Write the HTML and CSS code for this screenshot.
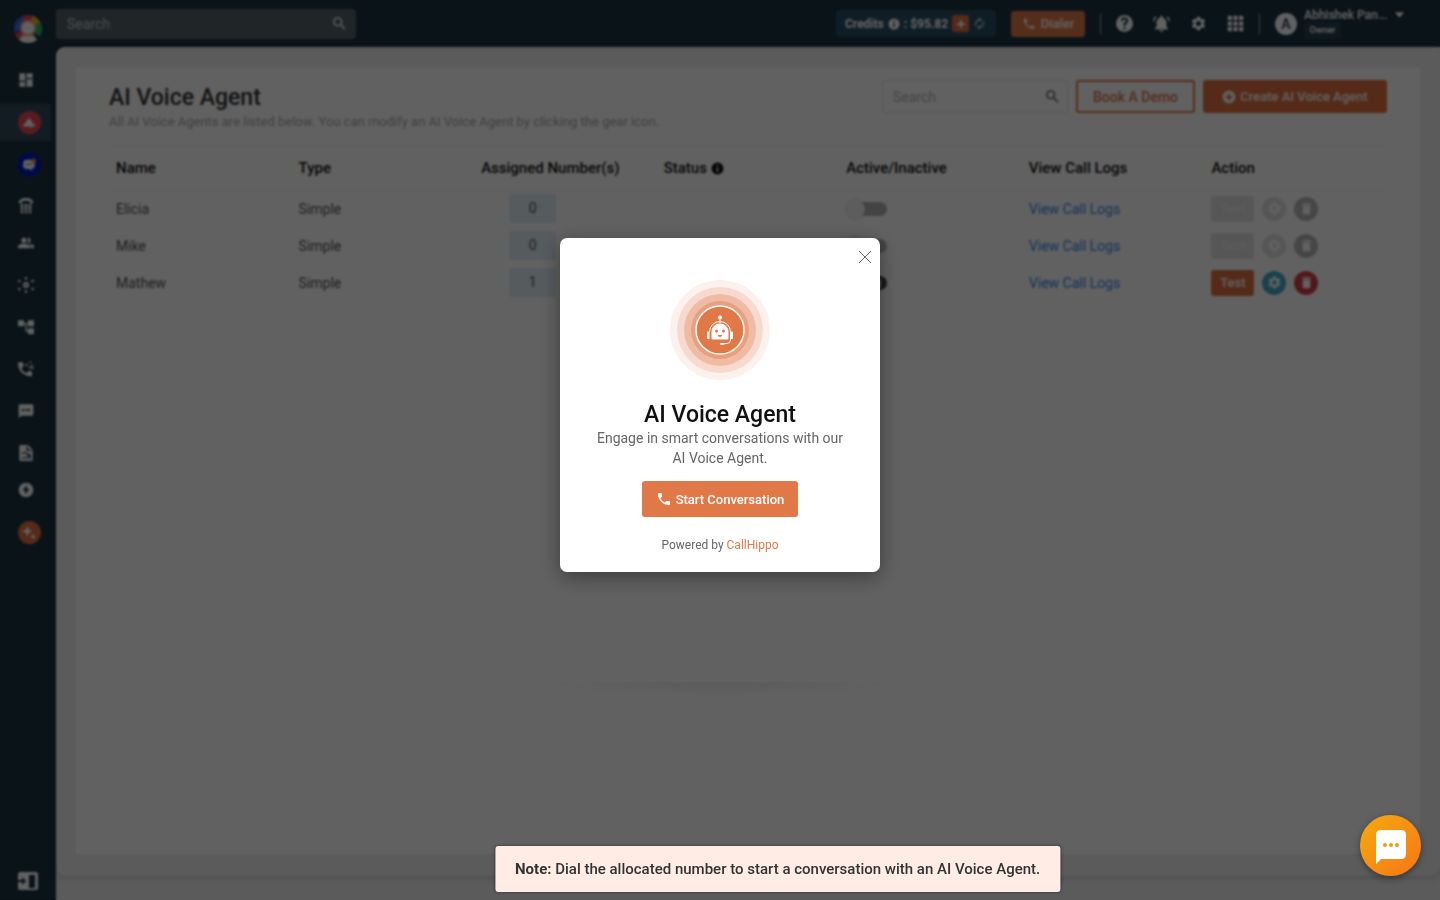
FILE: index.html
```html
<!doctype html>
<html lang="en">
<head>
    <meta charset="UTF-8">
    <meta name="viewport" content="width=device-width, initial-scale=1.0">
    <title>AI Voice Agent</title>
    <link rel="stylesheet" href="styles.css">
</head>
<body>
    <svg class="sprite" aria-hidden="true">
        <symbol id="i-search" viewBox="0 0 24 24"><path d="M15.5 14h-.79l-.28-.27A6.47 6.47 0 0 0 16 9.5 6.5 6.5 0 1 0 9.5 16c1.61 0 3.09-.59 4.23-1.57l.27.28v.79l5 4.99L20.49 19l-4.99-5zm-6 0C7.01 14 5 11.99 5 9.5S7.01 5 9.5 5 14 7.01 14 9.5 11.99 14 9.5 14z"/></symbol>
        <symbol id="i-phone" viewBox="0 0 24 24"><path d="M6.62 10.79a15.05 15.05 0 0 0 6.59 6.59l2.2-2.2a1 1 0 0 1 1.02-.24c1.12.37 2.33.57 3.57.57a1 1 0 0 1 1 1V20a1 1 0 0 1-1 1A17 17 0 0 1 3 4a1 1 0 0 1 1-1h3.5a1 1 0 0 1 1 1c0 1.25.2 2.45.57 3.57a1 1 0 0 1-.25 1.02l-2.2 2.2z"/></symbol>
        <symbol id="i-gear" viewBox="0 0 24 24"><path d="M19.14 12.94c.04-.3.06-.61.06-.94s-.02-.64-.07-.94l2.03-1.58a.49.49 0 0 0 .12-.61l-1.92-3.32a.49.49 0 0 0-.59-.22l-2.39.96a7.03 7.03 0 0 0-1.62-.94l-.36-2.54a.48.48 0 0 0-.48-.41h-3.84a.47.47 0 0 0-.47.41l-.36 2.54c-.59.24-1.13.57-1.62.94l-2.39-.96a.48.48 0 0 0-.59.22L2.74 8.87a.48.48 0 0 0 .12.61l2.03 1.58c-.05.3-.09.63-.09.94s.02.64.07.94l-2.03 1.58a.49.49 0 0 0-.12.61l1.92 3.32c.12.22.37.29.59.22l2.39-.96c.5.38 1.03.7 1.62.94l.36 2.54c.05.24.24.41.48.41h3.84c.24 0 .44-.17.47-.41l.36-2.54c.59-.24 1.13-.56 1.62-.94l2.39.96c.22.08.47 0 .59-.22l1.92-3.32a.48.48 0 0 0-.12-.61l-2.01-1.58zM12 15.6A3.6 3.6 0 1 1 12 8.4a3.6 3.6 0 0 1 0 7.2z"/></symbol>
        <symbol id="i-trash" viewBox="0 0 24 24"><path d="M6 19a2 2 0 0 0 2 2h8a2 2 0 0 0 2-2V7H6v12zM19 4h-3.5l-1-1h-5l-1 1H5v2h14V4z"/></symbol>
        <symbol id="i-info" viewBox="0 0 24 24"><path d="M12 1a11 11 0 1 0 0 22 11 11 0 0 0 0-22zm1.500 17h-3v-7.500h3V18zm0-9.500h-3v-3h3v3z"/></symbol>
    </svg>

    <div class="app">
        <nav class="sidebar">
            <a class="logo" href="#" aria-label="Home">
                <svg viewBox="0 0 28 28" width="28" height="28">
                    <clipPath id="logo-clip"><circle cx="14" cy="14" r="14"/></clipPath>
                    <g clip-path="url(#logo-clip)">
                        <path d="M14 14V-4H-4v22z" fill="#3a6fe0"/>
                        <path d="M14 14 8 3 12-2h8z" fill="#e8455a"/>
                        <path d="M14 14 20-4h10v12z" fill="#f2b01e"/>
                        <path d="M14 14 30 5v19z" fill="#2db36a"/>
                        <path d="M14 14-2 19l6 9z" fill="#e8455a"/>
                        <circle cx="14" cy="13" r="8" fill="#f3a9a0"/>
                        <path d="M7 20h14v4H7z" fill="#f0c070"/>
                        <ellipse cx="14" cy="27" rx="10" ry="6" fill="#fff"/>
                        <circle cx="14" cy="13" r="6" fill="#fff"/>
                    </g>
                </svg>
            </a>
            <a class="nav-item" href="#" aria-label="Dashboard"><svg viewBox="0 0 24 24"><path d="M2 13h9V2H2v11zm0 9h9v-7H2v7zm11 0h9V11h-9v11zm0-20v7h9V2h-9z"/></svg></a>
            <a class="nav-item has-badge active" href="#" aria-label="AI Voice Agent">
                <span class="badge red"><svg viewBox="0 0 24 24"><path d="M12 2l2 4 2 1 1 4 5 4v3h-5l-3 3v-3H2v-3l5-4 1-4 3-1z"/></svg></span>
            </a>
            <a class="nav-item has-badge" href="#" aria-label="Chat">
                <span class="badge blue"><svg viewBox="0 0 24 24"><path d="M8 3h8q6 0 6 6v3q0 6-5 6l1 4-6-3H8q-6 0-6-6V9q0-6 6-6z"/><path d="M6 11h11" stroke="#8a8fd0" stroke-width="2"/><circle cx="20" cy="5" r="4" fill="#f09a1a"/></svg></span>
            </a>
            <a class="nav-item tight" href="#" aria-label="Numbers"><svg viewBox="0 0 24 24"><path d="M12 0C5 0 1 3 1 8h5V5q6-2 12 0v3h5c0-5-4-8-11-8z"/><path d="M4 9h4v4H4zm6 0h4v4h-4zm6 0h4v4h-4zM4 14h4v4H4zm6 0h4v4h-4zm6 0h4v4h-4zM4 19h4v4H4zm6 0h4v4h-4zm6 0h4v4h-4z"/></svg></a>
            <a class="nav-item close-up" href="#" aria-label="Users"><svg viewBox="0 0 24 24"><path d="M16.700 13.100C18 14 19 15.300 19 17v3h5v-3c0-2.200-3.600-3.500-7.300-3.900zM9 12a4 4 0 1 0 0-8 4 4 0 0 0 0 8zm6 0a4 4 0 1 0 0-8c-.5 0-.9.100-1.300.200a6 6 0 0 1 0 7.600c.4.100.8.200 1.300.200zm-6 1c-3 0-9 1.300-9 4v3h18v-3c0-2.700-6-4-9-4z"/></svg></a>
            <a class="nav-item" href="#" aria-label="Integrations"><svg viewBox="0 0 24 24"><circle cx="12" cy="12" r="3" fill="none" stroke="#fff" stroke-width="3"/><circle cx="12" cy="2" r="2"/><circle cx="12" cy="22" r="2"/><circle cx="2" cy="6" r="2"/><circle cx="22" cy="6" r="2"/><circle cx="2" cy="18" r="2"/><circle cx="22" cy="18" r="2"/></svg></a>
            <a class="nav-item" href="#" aria-label="Call flow"><svg viewBox="0 0 24 24"><path d="M24 11V2h-9v4H9V2H0v9h9V8h2v11h4v4h9v-9h-9v3h-2V8h2v3z"/></svg></a>
            <a class="nav-item" href="#" aria-label="Power dialer"><svg viewBox="0 0 24 24"><path d="M5 10.800C6.400 14.600 9.400 17 13.200 18.400l2.200-3.200q.5-.4 1-.2l4.600.6V22a1 1 0 0 1-1 1C8 23 0 14 0 3a1 1 0 0 1 1-1h6.500l1 5q0 .8-.4 1.200z"/><path d="M11 5l3-1 1 3-3 1zm6-3l2-2 1 2-2 2zm-1 8l6-5 1 1-6 6zm4-1h3v3h-3z"/></svg></a>
            <a class="nav-item" href="#" aria-label="SMS"><svg viewBox="0 0 24 24"><path d="M21 2H3a2 2 0 0 0-2 2v19l4-4h16a2 2 0 0 0 2-2V4a2 2 0 0 0-2-2zM9 12H6V9h3v3zm5 0h-3V9h3v3zm4 0h-3V9h3v3z"/></svg></a>
            <a class="nav-item" href="#" aria-label="Reports"><svg viewBox="0 0 24 24"><path d="M4 0h11l7 7v15a2 2 0 0 1-2 2H4a2 2 0 0 1-2-2V2a2 2 0 0 1 2-2z"/><path d="M14 2v6h6M6 13q4-4 7 0t5 0M7 21v-3m4 3v-4m4 4v-5m3 5v-6" fill="none" stroke="#1a3040" stroke-width="2"/></svg></a>
            <a class="nav-item close-up" href="#" aria-label="Activity"><svg viewBox="0 0 24 24"><path d="M12 1a11 11 0 1 0 0 22 11 11 0 0 0 0-22zm-1 18v-6H7l6-9v6h4z"/></svg></a>
            <a class="nav-item has-badge" href="#" aria-label="AI">
                <span class="badge orange"><svg viewBox="0 0 24 24"><path d="M9 0l2.500 6.500L18 9l-6.500 2.500L9 18l-2.500-6.500L0 9l6.500-2.500zM19 13l1.500 3.500L24 18l-3.500 1.500L19 23l-1.500-3.500L14 18l3.500-1.500z"/></svg></span>
            </a>
            <a class="nav-item nav-bottom" href="#" aria-label="Expand menu"><svg viewBox="0 0 20 18"><path d="M2 0h16a2 2 0 0 1 2 2v14a2 2 0 0 1-2 2H2a2 2 0 0 1-2-2V2a2 2 0 0 1 2-2z"/><path d="M11 3h6v13h-6zM0 8h4V5l4 4-4 4v-3H0z" fill="#1a3040"/></svg></a>
        </nav>

        <div class="page">
            <header class="topbar">
                <div class="top-search">
                    <input type="search" placeholder="Search" aria-label="Search">
                    <svg class="icon"><use href="#i-search"/></svg>
                </div>
                <div class="top-right">
                    <div class="credits">
                        <span>Credits</span>
                        <svg class="icon"><use href="#i-info"/></svg>
                        <span>: $95.82</span>
                        <button class="add" aria-label="Add credits"><svg viewBox="0 0 10 10"><path d="M4 1h2v3h3v2H6v3H4V6H1V4h3z"/></svg></button>
                        <button class="refresh" aria-label="Refresh"><svg viewBox="0 0 24 24"><path d="M12 6v3l4-4-4-4v3a8 8 0 0 0-6.800 12.200l1.500-1.500A6 6 0 0 1 12 6zm6.800 1.700-1.500 1.500A6 6 0 0 1 12 18v-3l-4 4 4 4v-3a8 8 0 0 0 6.800-12.300z"/></svg></button>
                    </div>
                    <button class="dialer"><svg class="icon"><use href="#i-phone"/></svg>Dialer</button>
                    <span class="divider"></span>
                    <div class="tools">
                        <button aria-label="Help"><svg viewBox="0 0 24 24"><path d="M12 0a12 12 0 1 0 0 24 12 12 0 0 0 0-24zm1.300 20h-2.800v-2.800h2.800V20zm2.700-9c-1.300 1.300-2.500 2-2.500 4.200h-3c0-3.200 1-4 2.600-5.500.5-.5.9-1 .9-1.700a2 2 0 0 0-4 0H7a5 5 0 0 1 10 0c0 1.100-.4 2.400-1 3z"/></svg></button>
                        <button aria-label="Notifications"><svg viewBox="0 0 24 24"><path d="M12 24a2.500 2.500 0 0 0 2.500-2.500h-5A2.500 2.500 0 0 0 12 24zm7-7.500V11c0-3.500-2-6-5-7V3a2 2 0 0 0-4 0v1c-3 1-5 3.500-5 7v5.500l-2 2v2h18v-2zM5 3 3.500 1.500A10 10 0 0 0 0 9h2a8 8 0 0 1 3-6zm17 6h2a10 10 0 0 0-3.500-7.500L19 3a8 8 0 0 1 3 6z"/></svg></button>
                        <button aria-label="Settings"><svg><use href="#i-gear"/></svg></button>
                        <button aria-label="Apps"><svg viewBox="0 0 24 24"><path d="M1 1h6v6H1zm8 0h6v6H9zm8 0h6v6h-6zM1 9h6v6H1zm8 0h6v6H9zm8 0h6v6h-6zM1 17h6v6H1zm8 0h6v6H9zm8 0h6v6h-6z"/></svg></button>
                    </div>
                    <span class="divider"></span>
                    <div class="user">
                        <span class="avatar">A</span>
                        <div class="user-info">
                            <span class="user-name">Abhishek Pan...</span>
                            <span class="role">Owner</span>
                        </div>
                        <svg class="caret" viewBox="0 0 10 6"><path d="M0 0h10L5 6z"/></svg>
                    </div>
                </div>
            </header>

            <div class="backdrop">
                <main class="content">
                    <section class="card">
                        <div class="card-head">
                            <div>
                                <h1>AI Voice Agent</h1>
                                <p>All AI Voice Agents are listed below. You can modify an AI Voice Agent by clicking the gear icon.</p>
                            </div>
                            <div class="card-actions">
                                <div class="list-search">
                                    <input type="search" placeholder="Search" aria-label="Search agents">
                                    <svg class="icon"><use href="#i-search"/></svg>
                                </div>
                                <button class="btn-outline">Book A Demo</button>
                                <button class="btn-primary">
                                    <svg class="icon" viewBox="0 0 24 24"><path d="M12 1a11 11 0 1 0 0 22 11 11 0 0 0 0-22zm6 12.500h-4.500V18h-3v-4.500H6v-3h4.500V6h3v4.500H18z"/></svg>Create AI Voice Agent
                                </button>
                            </div>
                        </div>
                        <table>
                            <thead>
                                <tr>
                                    <th>Name</th>
                                    <th>Type</th>
                                    <th>Assigned Number(s)</th>
                                    <th>Status <svg class="icon"><use href="#i-info"/></svg></th>
                                    <th>Active/Inactive</th>
                                    <th>View Call Logs</th>
                                    <th>Action</th>
                                </tr>
                            </thead>
                            <tbody>
                                <tr>
                                    <td>Elicia</td>
                                    <td>Simple</td>
                                    <td><span class="count">0</span></td>
                                    <td></td>
                                    <td><input type="checkbox" class="switch" aria-label="Elicia active"></td>
                                    <td><a href="#">View Call Logs</a></td>
                                    <td>
                                        <div class="actions">
                                            <button class="test" disabled>Test</button>
                                            <button class="round edit" disabled aria-label="Edit"><svg><use href="#i-gear"/></svg></button>
                                            <button class="round delete" disabled aria-label="Delete"><svg><use href="#i-trash"/></svg></button>
                                        </div>
                                    </td>
                                </tr>
                                <tr>
                                    <td>Mike</td>
                                    <td>Simple</td>
                                    <td><span class="count">0</span></td>
                                    <td></td>
                                    <td><input type="checkbox" class="switch" aria-label="Mike active"></td>
                                    <td><a href="#">View Call Logs</a></td>
                                    <td>
                                        <div class="actions">
                                            <button class="test" disabled>Test</button>
                                            <button class="round edit" disabled aria-label="Edit"><svg><use href="#i-gear"/></svg></button>
                                            <button class="round delete" disabled aria-label="Delete"><svg><use href="#i-trash"/></svg></button>
                                        </div>
                                    </td>
                                </tr>
                                <tr>
                                    <td>Mathew</td>
                                    <td>Simple</td>
                                    <td><span class="count">1</span></td>
                                    <td></td>
                                    <td><input type="checkbox" class="switch" checked aria-label="Mathew active"></td>
                                    <td><a href="#">View Call Logs</a></td>
                                    <td>
                                        <div class="actions">
                                            <button class="test">Test</button>
                                            <button class="round edit" aria-label="Edit"><svg><use href="#i-gear"/></svg></button>
                                            <button class="round delete" aria-label="Delete"><svg><use href="#i-trash"/></svg></button>
                                        </div>
                                    </td>
                                </tr>
                            </tbody>
                        </table>
                    </section>
                </main>
            </div>
        </div>
    </div>

    <div class="overlay">
        <div class="modal" role="dialog" aria-labelledby="modal-title">
            <button class="close" aria-label="Close"><svg viewBox="0 0 12 12" width="12" height="12"><path d="M0 0l12 12M12 0 0 12"/></svg></button>
            <svg class="bot" viewBox="0 0 102 102" width="102" height="102">
                <circle cx="51" cy="51" r="50" fill="#fdf1ed"/>
                <circle cx="51" cy="51" r="43" fill="#f7dacd"/>
                <circle cx="51" cy="51" r="36" fill="#f0bba5"/>
                <circle cx="51" cy="51" r="29" fill="#ea9f7e"/>
                <circle cx="51" cy="51" r="24" fill="#e07848" stroke="#fff" stroke-width="1.500"/>
                <circle cx="51" cy="38.500" r="2" fill="#fff"/>
                <path d="M51 39v5M40.500 53a10.500 10.500 0 0 1 21 0v8q0 3.500-3.500 3.500h-3" fill="none" stroke="#fff" stroke-width="1"/>
                <path d="M42.500 59v-6a8.500 8.500 0 0 1 17 0v6q0 1.500-1.500 1.500H44q-1.500 0-1.500-1.500zM38 53.500q0-1 1-1h1.500V60H39q-1 0-1-1zM61.500 52.500H63q1 0 1 1V59q0 1-1 1h-1.500zM51.500 64h4v1.800h-4q-1-.9 0-1.800z" fill="#fff"/>
                <circle cx="47.500" cy="52" r="1.500" fill="#e07848"/>
                <circle cx="54.500" cy="52" r="1.500" fill="#e07848"/>
                <path d="M48.700 56h4.600q-.5 2-2.300 2t-2.300-2z" fill="#e07848"/>
            </svg>
            <h2 id="modal-title">AI Voice Agent</h2>
            <p class="modal-text">Engage in smart conversations with our AI Voice Agent.</p>
            <button class="start"><svg class="icon"><use href="#i-phone"/></svg>Start Conversation</button>
            <p class="powered">Powered by <a href="#">CallHippo</a></p>
        </div>
    </div>

    <div class="note"><strong>Note:</strong> Dial the allocated number to start a conversation with an AI Voice Agent.</div>

    <button class="chat" aria-label="Open chat">
        <svg viewBox="0 0 32 36" width="32" height="36"><path d="M6 1h20q5 0 5 5v19q0 5-5 5H6l-5 5V6q0-5 5-5z" fill="#fff"/><circle cx="10" cy="16" r="2" fill="#f79a10"/><circle cx="16" cy="16" r="2" fill="#f79a10"/><circle cx="22" cy="16" r="2" fill="#f79a10"/></svg>
    </button>
</body>
</html>
```
FILE: styles.css
```css
* {
    box-sizing: border-box;
}

body {
    margin: 0;
    font-family: Roboto, "Liberation Sans", sans-serif;
    font-size: 14px;
    line-height: 20px;
    color: #555;
}

h1,
h2,
p {
    margin: 0;
}

button {
    font-family: inherit;
    border: none;
    padding: 0;
    cursor: pointer;
}

input {
    font-family: inherit;
}

a {
    text-decoration: none;
}

.sprite {
    display: none;
}

.icon {
    width: 14px;
    height: 14px;
    fill: currentColor;
}

.app {
    display: flex;
    min-height: 100vh;
    background: #1a3240;
}

/* sidebar */
.sidebar {
    width: 56px;
    padding: 15px 0 1px;
    display: flex;
    flex-direction: column;
}

.logo {
    height: 46px;
    padding-left: 14px;
}

.nav-item {
    width: 51px;
    height: 37px;
    margin-top: 5px;
    display: flex;
    align-items: center;
    justify-content: center;
}

.logo + .nav-item,
.nav-item.close-up {
    margin-top: 0;
}

.nav-item.has-badge {
    margin-top: 6px;
    padding-left: 7px;
}

.nav-item.active + .has-badge {
    margin-top: 5px;
}

.nav-item.tight {
    margin-top: 4px;
}

.nav-item.active {
    background: #354a5c;
}

.nav-item svg {
    width: 16px;
    height: 16px;
    fill: #fff;
}

.nav-item.nav-bottom {
    width: 56px;
    margin-top: auto;
}

.nav-bottom svg {
    width: 20px;
    height: 18px;
}

.badge {
    width: 23px;
    height: 23px;
    border-radius: 50%;
    display: flex;
    align-items: center;
    justify-content: center;
}

.nav-item .badge svg {
    width: 14px;
    height: 14px;
}

.badge.red {
    background: #e84a55;
}

.badge.blue {
    background: #0018c8;
}

.badge.orange {
    background: #e07040;
}

/* top bar */
.page {
    flex: 1;
    display: flex;
    flex-direction: column;
    min-width: 0;
}

.topbar {
    height: 47px;
    padding-right: 36px;
    display: flex;
    align-items: center;
    justify-content: space-between;
}

.top-search,
.list-search {
    display: flex;
    align-items: center;
}

.top-search {
    width: 300px;
    height: 30px;
    padding: 0 8px 0 11px;
    border-radius: 3px;
    background: #566469;
    color: #fff;
}

.top-search input,
.list-search input {
    flex: 1;
    min-width: 0;
    padding: 0;
    border: none;
    outline: none;
    background: none;
    font-size: 14px;
}

.top-search input::placeholder {
    color: #c0c6c9;
}

.top-search .icon,
.list-search .icon {
    width: 17px;
    height: 17px;
}

.top-right {
    display: flex;
    align-items: center;
    color: #fff;
}

.credits {
    height: 27px;
    width: 160px;
    padding: 0 9px;
    margin-right: 15px;
    display: flex;
    align-items: center;
    gap: 4px;
    border-radius: 4px;
    background: #285064;
    font-size: 12px;
    font-weight: 700;
    white-space: nowrap;
}

.credits .icon {
    width: 12px;
    height: 12px;
}

.credits svg {
    fill: #fff;
}

.add {
    width: 17px;
    height: 17px;
    border-radius: 3px;
    background: #e07040;
    display: flex;
    align-items: center;
    justify-content: center;
}

.add svg {
    width: 10px;
    height: 10px;
}

.refresh {
    background: none;
    display: flex;
}

.refresh svg {
    width: 13px;
    height: 13px;
}

.dialer {
    width: 74px;
    height: 26px;
    display: flex;
    align-items: center;
    justify-content: center;
    gap: 5px;
    border-radius: 3px;
    background: #e07848;
    color: #fff;
    font-size: 13px;
    font-weight: 500;
}

.divider {
    width: 1px;
    height: 20px;
    margin: 0 15px;
    background: #b0b8bc;
}

.tools {
    display: flex;
    gap: 20px;
}

.tools button {
    display: flex;
    background: none;
}

.tools svg {
    width: 17px;
    height: 17px;
    fill: #fff;
}

.user {
    display: flex;
    align-items: center;
    gap: 7px;
}

.avatar {
    width: 22px;
    height: 22px;
    border-radius: 50%;
    background: #fff;
    color: #2a3a44;
    font-size: 14px;
    font-weight: 500;
    line-height: 22px;
    text-align: center;
}

.user-info {
    width: 84px;
    font-size: 12px;
    font-weight: 500;
    line-height: 14px;
}

.user-name,
.role {
    display: block;
}

.role {
    width: 37px;
    height: 17px;
    border-radius: 3px;
    background: #263f4f;
    font-size: 9px;
    line-height: 17px;
    text-align: center;
}

.caret {
    width: 9px;
    height: 6px;
    margin-bottom: 18px;
    fill: #fff;
}

/* page content */
.backdrop {
    flex: 1;
    display: flex;
    padding-bottom: 24px;
    border-top-left-radius: 9px;
    background: #eeeef2;
}

.content {
    flex: 1;
    display: flex;
    padding: 20px 20px 22px;
    border-radius: 9px;
    background: #eeeef2;
    box-shadow: 0 2px 6px rgba(0, 0, 0, 0.15);
}

.card {
    flex: 1;
    padding: 13px 33px;
    background: #fff;
}

.card-head {
    height: 67px;
    display: flex;
    justify-content: space-between;
    border-bottom: 1px solid #efefef;
}

.card-head h1 {
    padding-top: 4px;
    font-size: 23px;
    font-weight: 500;
    line-height: 28px;
    color: #333;
}

.card-head p {
    font-size: 13px;
    color: #aaa;
}

.card-actions {
    display: flex;
    gap: 8px;
}

.card-actions > * {
    height: 33px;
    border-radius: 3px;
}

.list-search {
    width: 186px;
    padding: 0 6px 0 10px;
    border: 1px solid #e6e6e6;
    color: #555;
}

.list-search input::placeholder {
    color: #b5b5b5;
}

.btn-outline {
    width: 119px;
    border: 2px solid #e07848;
    background: none;
    color: #e07848;
    font-size: 14px;
    font-weight: 500;
}

.btn-primary {
    width: 184px;
    display: flex;
    align-items: center;
    justify-content: center;
    gap: 4px;
    background: #e07040;
    color: #fff;
    font-size: 13px;
    font-weight: 500;
}

table {
    width: 100%;
    table-layout: fixed;
    border-collapse: collapse;
}

th,
td {
    padding: 0 7px;
    text-align: left;
}

th {
    height: 43px;
    border-bottom: 1px solid #efefef;
    font-size: 15px;
    font-weight: 500;
    color: #111;
}

th .icon {
    width: 13px;
    height: 13px;
    vertical-align: -2px;
}

td {
    height: 37px;
    font-size: 14px;
}

td a {
    color: #3a88ea;
}

.count {
    display: block;
    width: 47px;
    height: 29px;
    margin-left: 28px;
    border-radius: 3px;
    background: #e3eef8;
    line-height: 29px;
    text-align: center;
}

.switch {
    appearance: none;
    display: block;
    width: 41px;
    height: 14px;
    margin: 0;
    border-radius: 7px;
    background: #b3b3b3;
}

.switch::before {
    content: "";
    display: block;
    width: 19px;
    height: 19px;
    margin-top: -2px;
    border-radius: 50%;
    background: #f5f5f5;
    box-shadow: 0 0 3px rgba(0, 0, 0, 0.2);
}

.switch:checked {
    background: #444;
}

.switch:checked::before {
    margin-left: 16px;
}

.actions {
    display: flex;
    align-items: center;
    gap: 8px;
}

.test {
    width: 43px;
    height: 26px;
    border-radius: 3px;
    background: #e07040;
    color: #fff;
    font-size: 13px;
    font-weight: 500;
}

.round {
    width: 24px;
    height: 24px;
    border-radius: 50%;
    display: flex;
    align-items: center;
    justify-content: center;
}

.round svg {
    width: 15px;
    height: 15px;
    fill: #fff;
}

.edit {
    background: #45adc8;
}

.delete {
    background: #d6404a;
}

.test:disabled,
.edit:disabled {
    background: #e2e2e2;
    color: #efefef;
}

.delete:disabled {
    background: #b8b8b8;
}

/* dialog */
.overlay {
    position: fixed;
    inset: 0;
    display: flex;
    align-items: center;
    justify-content: center;
    padding-bottom: 90px;
    background: rgba(0, 0, 0, 0.62);
    backdrop-filter: blur(1px);
}

.modal {
    position: relative;
    width: 320px;
    padding: 41px 30px 17px;
    display: flex;
    flex-direction: column;
    align-items: center;
    border-radius: 7px;
    background: #fff;
    text-align: center;
    box-shadow: 0 5px 20px rgba(0, 0, 0, 0.4);
}

/* faint ground shadow under the dialog */
.modal::after {
    content: "";
    position: absolute;
    top: 444px;
    left: -20px;
    right: -20px;
    height: 14px;
    background: radial-gradient(ellipse at top, rgba(0, 0, 0, 0.06), transparent 70%);
}

.close {
    position: absolute;
    top: 13px;
    right: 9px;
    display: flex;
    background: none;
}

.close path {
    fill: none;
    stroke: #666;
    stroke-width: 1;
}

.modal h2 {
    margin-top: 20px;
    font-size: 23px;
    font-weight: 500;
    line-height: 27px;
    color: #111;
}

.modal-text {
    color: #666;
}

.start {
    width: 156px;
    height: 36px;
    margin-top: 13px;
    display: flex;
    align-items: center;
    justify-content: center;
    gap: 4px;
    border-radius: 3px;
    background: #e07848;
    color: #fff;
    font-size: 13px;
    font-weight: 500;
}

.start .icon {
    width: 16px;
    height: 16px;
}

.powered {
    margin-top: 18px;
    font-size: 12px;
    color: #666;
}

.powered a {
    color: #e07848;
}

.note {
    position: fixed;
    left: 54%;
    bottom: 8px;
    padding: 13px 20px;
    transform: translateX(-50%);
    border-radius: 3px;
    background: #feece5;
    box-shadow: 0 0 3px rgba(0, 0, 0, 0.5);
    color: #333;
    font-size: 15px;
    font-weight: 500;
    white-space: nowrap;
}

.note strong {
    font-weight: 700;
}

.chat {
    position: fixed;
    right: 19px;
    bottom: 24px;
    width: 61px;
    height: 61px;
    padding-top: 3px;
    border-radius: 50%;
    display: flex;
    align-items: center;
    justify-content: center;
    background: linear-gradient(135deg, #f5ab10, #f77515);
    box-shadow: 0 2px 6px rgba(0, 0, 0, 0.4);
}
```
